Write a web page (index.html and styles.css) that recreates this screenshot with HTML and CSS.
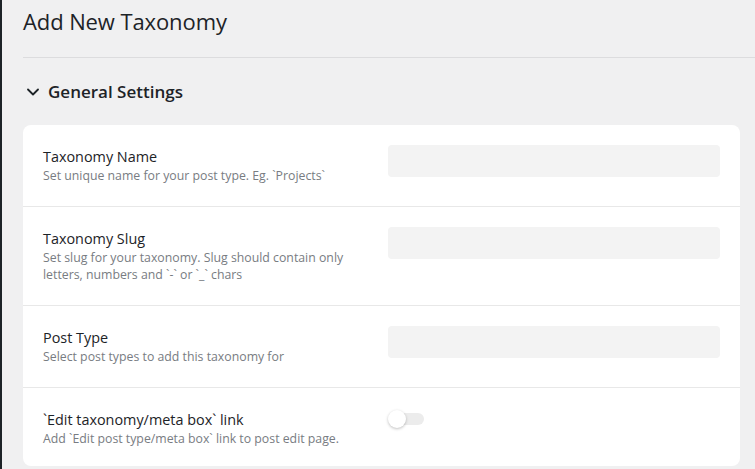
FILE: index.html
```html
<!DOCTYPE html>
<html lang="en">
<head>
<meta charset="utf-8">
<title>Add New Taxonomy</title>
<link rel="stylesheet" href="styles.css">
</head>
<body>
<div class="layout">
  <div class="adminbar"></div>
  <main class="main">
    <header class="page-head">
      <h1 class="page-title">Add New Taxonomy</h1>
    </header>
    <section class="section">
      <div class="section-head">
        <svg class="chevron" width="12" height="8" viewBox="0 0 12 8" aria-hidden="true">
          <path d="M1 1.5 L6 6.5 L11 1.5" fill="none" stroke="#1d2327" stroke-width="1.8" stroke-linecap="round" stroke-linejoin="round"/>
        </svg>
        <h2 class="section-title">General Settings</h2>
      </div>
      <div class="card">
        <div class="row">
          <div class="field-info">
            <div class="field-label">Taxonomy Name</div>
            <div class="field-desc">Set unique name for your post type. Eg. `Projects`</div>
          </div>
          <div class="field-control"><div class="input"></div></div>
        </div>
        <div class="row">
          <div class="field-info">
            <div class="field-label">Taxonomy Slug</div>
            <div class="field-desc">Set slug for your taxonomy. Slug should contain only letters, numbers and `-` or `_` chars</div>
          </div>
          <div class="field-control"><div class="input"></div></div>
        </div>
        <div class="row">
          <div class="field-info">
            <div class="field-label">Post Type</div>
            <div class="field-desc">Select post types to add this taxonomy for</div>
          </div>
          <div class="field-control"><div class="input"></div></div>
        </div>
        <div class="row">
          <div class="field-info">
            <div class="field-label">`Edit taxonomy/meta box` link</div>
            <div class="field-desc">Add `Edit post type/meta box` link to post edit page.</div>
          </div>
          <div class="field-control">
            <div class="toggle"><span class="toggle-knob"></span></div>
          </div>
        </div>
      </div>
    </section>
  </main>
</div>
</body>
</html>
```

FILE: styles.css
```css
* { box-sizing: border-box; }
html, body { margin: 0; padding: 0; }
body {
  background: #f0f0f1;
  font-family: "Open Sans", "Noto Sans", sans-serif;
  color: #1d2327;
  overflow: hidden;
  height: 469px;
}
.layout { display: flex; min-height: 469px; }
.adminbar { width: 2px; background: #1d2327; flex: none; }
.main { flex: 1; padding-left: 21px; }
.page-head {
  height: 58px;
  border-bottom: 1px solid #dcdcde;
  padding-top: 5px;
}
.page-title {
  margin: 0;
  font-size: 22px;
  font-weight: 400;
  line-height: 32px;
  letter-spacing: -0.1px;
}
.section { padding-right: 15px; }
.section-head {
  display: flex;
  align-items: center;
  gap: 9px;
  height: 67px;
  padding-left: 4px;
  padding-top: 1px;
}
.chevron { flex: none; }
.section-title {
  margin: 0;
  font-size: 17px;
  font-weight: 600;
  line-height: 24px;
}
.card {
  background: #fff;
  border-radius: 8px;
  overflow: hidden;
}
.row {
  display: grid;
  grid-template-columns: 345px 1fr;
  padding: 20px 20px 22px;
  border-bottom: 1px solid #e8e8e8;
}
.row:last-child { border-bottom: 0; padding-bottom: 19px; }
.field-info { padding-top: 2px; padding-right: 20px; }
.field-label {
  font-size: 14.4px;
  line-height: 20px;
  font-weight: 500;
  color: #1d2327;
}
.field-desc {
  font-size: 12.3px;
  line-height: 17px;
  color: #787c82;
}
.input {
  height: 32px;
  background: #f3f3f3;
  border-radius: 4px;
}
.toggle {
  position: relative;
  width: 36px;
  height: 18px;
  margin-top: 2px;
}
.toggle::before {
  content: "";
  position: absolute;
  left: 7px;
  right: 0;
  top: 3px;
  height: 12px;
  border-radius: 6px;
  background: #ececec;
}
.toggle-knob {
  position: absolute;
  left: 0;
  top: 0;
  width: 18px;
  height: 18px;
  border-radius: 50%;
  background: #fff;
  box-shadow: 0 1px 3px rgba(0,0,0,0.25);
}
```
